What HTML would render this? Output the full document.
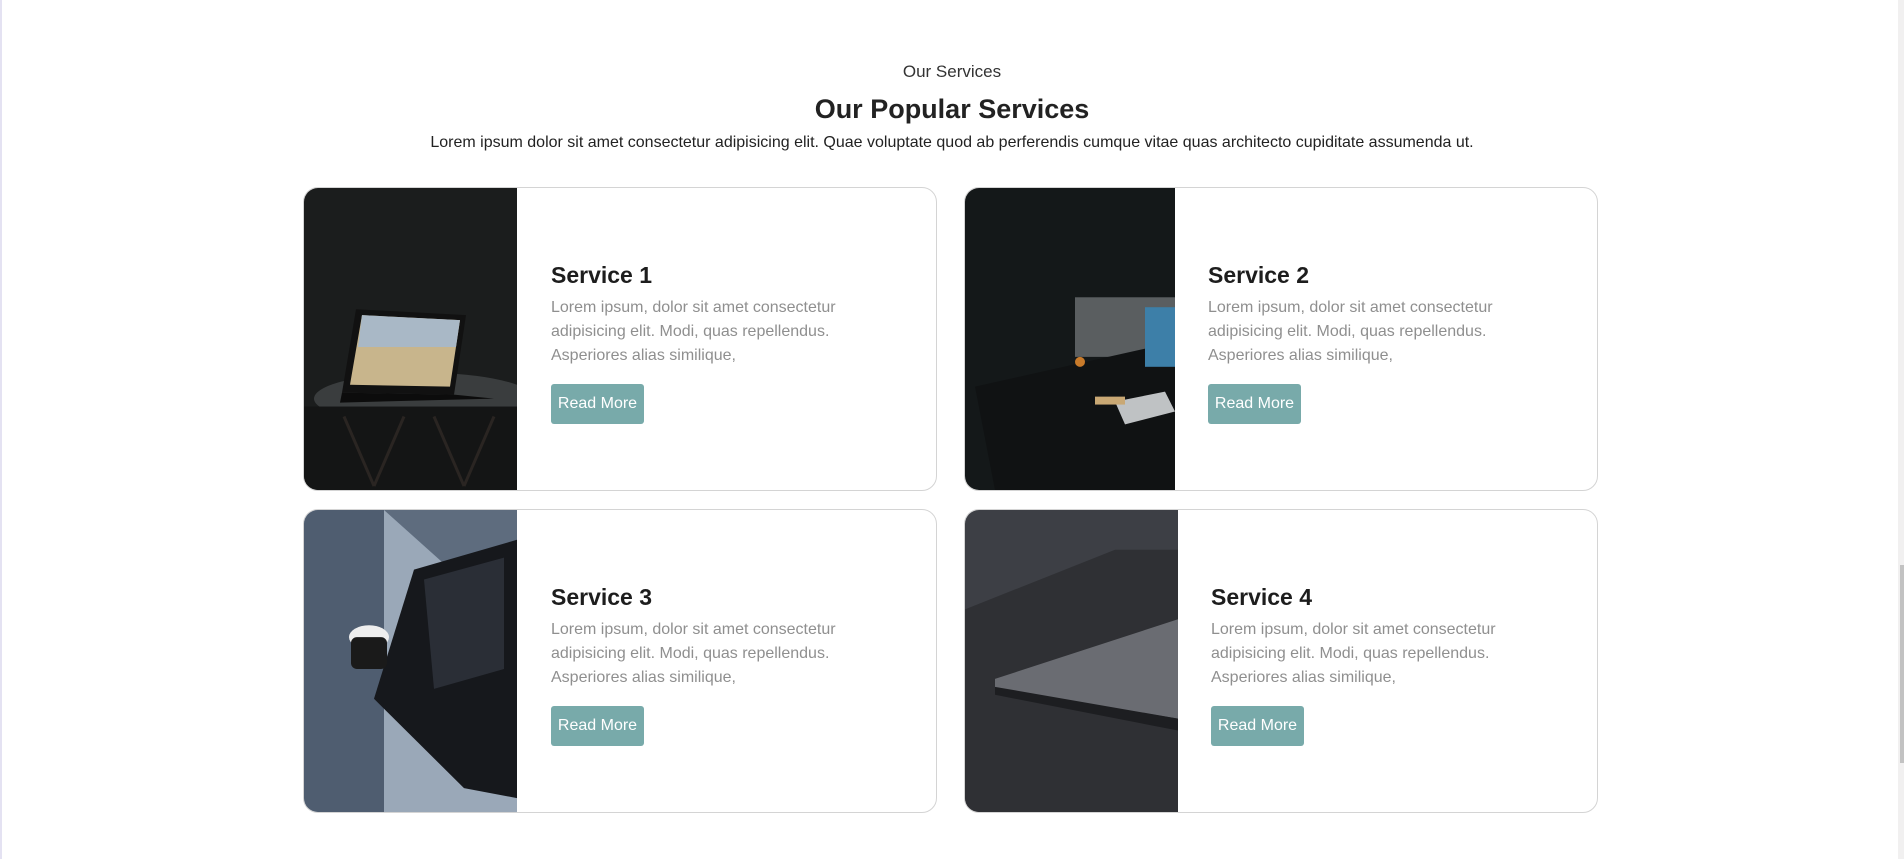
<!DOCTYPE html>
<html><head><meta charset="utf-8"><style>
*{box-sizing:border-box;margin:0;padding:0}
body{width:1904px;height:859px;background:#fff;font-family:"Liberation Sans",sans-serif;position:relative;overflow:hidden;border-left:2px solid #e4e2f2}
.sub{position:absolute;top:62px;left:0;width:1900px;text-align:center;font-size:17px;color:#333}
h1{position:absolute;top:94px;left:0;width:1900px;text-align:center;font-size:27px;font-weight:bold;color:#222}
.p{position:absolute;top:134px;left:0;width:1900px;text-align:center;font-size:16px;color:#222}
.card{position:absolute;width:634px;height:304px;border:1.5px solid #d4d4d4;border-radius:15px;overflow:hidden;background:#fff}
.img{position:absolute;left:0;top:0;bottom:0}
.img svg{display:block;width:100%;height:100%}
.t{position:absolute;top:74px}
.t h2{font-size:23px;font-weight:bold;color:#1d1d1d;margin-bottom:7px}
.t p{font-size:16px;line-height:24px;color:#8f8f8f;width:300px}
.btn{display:inline-block;margin-top:16px;width:93px;height:40px;line-height:40px;text-align:center;background:#78aaaa;color:#fff;font-size:16px;border-radius:3px}
.sb{position:absolute;right:0;top:0;width:6px;height:859px;background:#f1f0f0}
.th{position:absolute;right:0;top:565px;width:4px;height:198px;background:#c2c2c2}
</style></head><body>
<div class="sub">Our Services</div>
<h1>Our Popular Services</h1>
<div class="p">Lorem ipsum dolor sit amet consectetur adipisicing elit. Quae voluptate quod ab perferendis cumque vitae quas architecto cupiditate assumenda ut.</div>

<div class="card" style="left:301px;top:187px">
<div class="img" style="width:213px"><svg viewBox="0 0 213 304" preserveAspectRatio="none">
<rect width="213" height="304" fill="#1b1d1d"/>
<ellipse cx="120" cy="212" rx="110" ry="26" fill="#3a3d3e"/>
<rect x="0" y="220" width="213" height="84" fill="#141515"/>
<path d="M40 230 L70 300 M100 230 L70 300 M130 230 L160 300 M190 230 L160 300" stroke="#2a2522" stroke-width="3"/>
<polygon points="52,122 162,128 150,208 38,206" fill="#111"/>
<polygon points="58,128 156,133 146,200 46,198" fill="#c8b58c"/>
<polygon points="58,128 156,133 152,160 54,160" fill="#a9b8c6"/>
<polygon points="38,206 150,208 190,212 36,216" fill="#0c0c0c"/>
</svg></div>
<div class="t" style="left:247px"><h2>Service 1</h2><p>Lorem ipsum, dolor sit amet consectetur adipisicing elit. Modi, quas repellendus. Asperiores alias similique,</p><span class="btn">Read More</span></div>
</div>

<div class="card" style="left:962px;top:187px">
<div class="img" style="width:210px"><svg viewBox="0 0 210 304" preserveAspectRatio="none">
<rect width="210" height="304" fill="#141819"/>
<rect x="110" y="110" width="100" height="60" fill="#5a5e60"/>
<polygon points="10,200 210,155 210,304 30,304" fill="#101213"/>
<rect x="180" y="120" width="30" height="60" fill="#3d7fa8"/>
<polygon points="150,215 200,205 210,225 160,238" fill="#bfc2c4"/>
<rect x="130" y="210" width="30" height="8" fill="#c9a874"/>
<circle cx="115" cy="175" r="5" fill="#c87a2a"/>
</svg></div>
<div class="t" style="left:243px"><h2>Service 2</h2><p>Lorem ipsum, dolor sit amet consectetur adipisicing elit. Modi, quas repellendus. Asperiores alias similique,</p><span class="btn">Read More</span></div>
</div>

<div class="card" style="left:301px;top:509px">
<div class="img" style="width:213px"><svg viewBox="0 0 213 304" preserveAspectRatio="none">
<rect width="213" height="304" fill="#9aa8b8"/>
<rect width="80" height="304" fill="#4f5d70"/>
<polygon points="80,0 213,0 213,120" fill="#5e6c7e"/>
<polygon points="110,60 213,30 213,290 160,280 70,190" fill="#16181c"/>
<polygon points="120,70 200,48 200,160 130,180" fill="#2a2e36"/>
<ellipse cx="65" cy="128" rx="20" ry="12" fill="#eee"/>
<rect x="47" y="128" width="36" height="32" rx="6" fill="#1a1a1a"/>
</svg></div>
<div class="t" style="left:247px"><h2>Service 3</h2><p>Lorem ipsum, dolor sit amet consectetur adipisicing elit. Modi, quas repellendus. Asperiores alias similique,</p><span class="btn">Read More</span></div>
</div>

<div class="card" style="left:962px;top:509px">
<div class="img" style="width:213px"><svg viewBox="0 0 213 304" preserveAspectRatio="none">
<rect width="213" height="304" fill="#3d3f45"/>
<polygon points="0,100 150,40 213,40 213,304 0,304" fill="#2f3034"/>
<polygon points="30,170 213,110 213,210 30,180" fill="#6a6c72"/>
<polygon points="30,178 213,210 213,222 30,186" fill="#1d1e21"/>
</svg></div>
<div class="t" style="left:246px"><h2>Service 4</h2><p>Lorem ipsum, dolor sit amet consectetur adipisicing elit. Modi, quas repellendus. Asperiores alias similique,</p><span class="btn">Read More</span></div>
</div>

<div class="sb"></div><div class="th"></div>
</body></html>
